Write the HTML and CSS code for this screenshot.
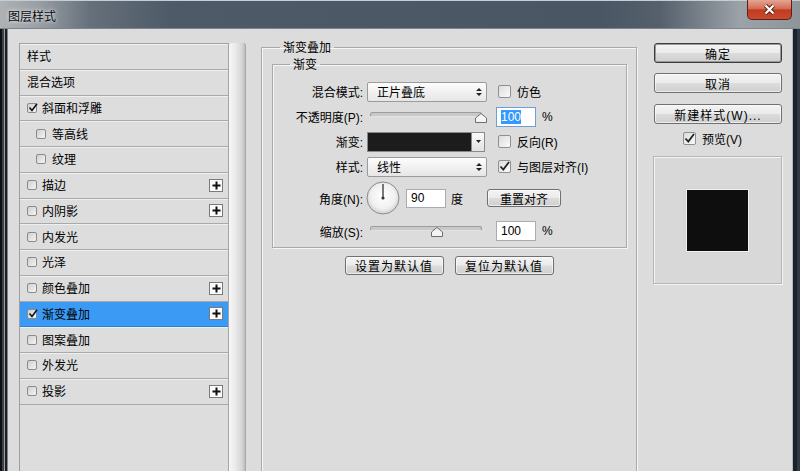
FILE: index.html
```html
<!DOCTYPE html>
<html lang="zh-CN">
<head>
<meta charset="utf-8">
<title>图层样式</title>
<link rel="stylesheet" href="styles.css">
</head>
<body>
<div class="window">
  <div class="titlebar">
    <span class="title">图层样式</span>
    <div class="close"><svg width="13" height="11" viewBox="0 0 13 11"><path d="M2.5 1.5 L10.5 9.5 M10.5 1.5 L2.5 9.5" stroke="#5b2014" stroke-width="4.2"/><path d="M2.5 1.5 L10.5 9.5 M10.5 1.5 L2.5 9.5" stroke="#fff" stroke-width="2.2"/></svg></div>
  </div>
  <div class="frame">
    <div class="client">
      <div class="left">
        <div class="list">
          <div class="row plain"><span>样式</span></div>
          <div class="row plain"><span>混合选项</span></div>
          <div class="row"><i class="cb"><svg width="10" height="10" viewBox="0 0 10 10"><path d="M1.5 4.5 L4 7.5 L9 0.8" fill="none" stroke="#111" stroke-width="1.6"/></svg></i><span>斜面和浮雕</span></div>
          <div class="row sub"><i class="cb"></i><span>等高线</span></div>
          <div class="row sub"><i class="cb"></i><span>纹理</span></div>
          <div class="row"><i class="cb"></i><span>描边</span><span class="plus"><svg width="9" height="9" viewBox="0 0 9 9"><path d="M4.5 0.5v8M0.5 4.5h8" stroke="#111" stroke-width="2"/></svg></span></div>
          <div class="row"><i class="cb"></i><span>内阴影</span><span class="plus"><svg width="9" height="9" viewBox="0 0 9 9"><path d="M4.5 0.5v8M0.5 4.5h8" stroke="#111" stroke-width="2"/></svg></span></div>
          <div class="row"><i class="cb"></i><span>内发光</span></div>
          <div class="row"><i class="cb"></i><span>光泽</span></div>
          <div class="row"><i class="cb"></i><span>颜色叠加</span><span class="plus"><svg width="9" height="9" viewBox="0 0 9 9"><path d="M4.5 0.5v8M0.5 4.5h8" stroke="#111" stroke-width="2"/></svg></span></div>
          <div class="row selected"><i class="cb"><svg width="10" height="10" viewBox="0 0 10 10"><path d="M1.5 4.5 L4 7.5 L9 0.8" fill="none" stroke="#111" stroke-width="1.6"/></svg></i><span>渐变叠加</span><span class="plus"><svg width="9" height="9" viewBox="0 0 9 9"><path d="M4.5 0.5v8M0.5 4.5h8" stroke="#111" stroke-width="2"/></svg></span></div>
          <div class="row"><i class="cb"></i><span>图案叠加</span></div>
          <div class="row"><i class="cb"></i><span>外发光</span></div>
          <div class="row"><i class="cb"></i><span>投影</span><span class="plus"><svg width="9" height="9" viewBox="0 0 9 9"><path d="M4.5 0.5v8M0.5 4.5h8" stroke="#111" stroke-width="2"/></svg></span></div>
        </div>
        <div class="strip"></div>
      </div>

      <div class="middle">
        <fieldset class="outer">
          <legend>渐变叠加</legend>
          <fieldset class="inner">
            <legend>渐变</legend>
            <div class="frow r25">
              <label>混合模式:</label>
              <div class="select"><span>正片叠底</span><svg class="updown" width="6" height="10" viewBox="0 0 6 10"><path d="M0 4 L3 1 L6 4Z M0 6 L3 9 L6 6Z" fill="#222"/></svg></div>
              <i class="box gap11"></i><span class="cbtext">仿色</span>
            </div>
            <div class="frow r25">
              <label>不透明度(P):</label>
              <div class="slider"><div class="track"></div><svg class="thumb" style="left:108px" width="12" height="10" viewBox="0 0 12 10"><path d="M6 0.5 L11.5 5 L11.5 9.5 L0.5 9.5 L0.5 5 Z" fill="#f4f4f4" stroke="#6e6e6e"/></svg></div>
              <div class="input focus"><span class="sel">100</span></div>
              <span class="pct">%</span>
            </div>
            <div class="frow r25">
              <label>渐变:</label>
              <div class="swatch"><div class="fill"></div><div class="drop"><svg width="5" height="3" viewBox="0 0 5 3"><path d="M0 0 H5 L2.5 3Z" fill="#222"/></svg></div></div>
              <i class="box gap13"></i><span class="cbtext">反向(R)</span>
            </div>
            <div class="frow r25">
              <label>样式:</label>
              <div class="select"><span>线性</span><svg class="updown" width="6" height="10" viewBox="0 0 6 10"><path d="M0 4 L3 1 L6 4Z M0 6 L3 9 L6 6Z" fill="#222"/></svg></div>
              <i class="box gap11"><svg width="13" height="13" viewBox="0 0 13 13"><path d="M2.5 6.5 L5.3 9.5 L11 2" fill="none" stroke="#222" stroke-width="1.8"/></svg></i><span class="cbtext">与图层对齐(I)</span>
            </div>
            <div class="frow r38">
              <label>角度(N):</label>
              <svg class="dial" width="34" height="34" viewBox="0 0 34 34">
                <defs><radialGradient id="dg" cx="50%" cy="45%" r="55%"><stop offset="0" stop-color="#ffffff"/><stop offset="0.7" stop-color="#f0f0f0"/><stop offset="1" stop-color="#cfcfcf"/></radialGradient></defs>
                <circle cx="17" cy="17" r="16" fill="url(#dg)" stroke="#8c8c8c"/>
                <path d="M17 17 V3" stroke="#333" stroke-width="1.3"/>
                <circle cx="17" cy="17" r="1.6" fill="#333"/>
              </svg>
              <div class="input angle">90</div>
              <span class="deg">度</span>
              <button class="btn reset">重置对齐</button>
            </div>
            <div class="frow r28">
              <label>缩放(S):</label>
              <div class="slider"><div class="track"></div><svg class="thumb" style="left:64px" width="12" height="10" viewBox="0 0 12 10"><path d="M6 0.5 L11.5 5 L11.5 9.5 L0.5 9.5 L0.5 5 Z" fill="#f4f4f4" stroke="#6e6e6e"/></svg></div>
              <div class="input">100</div>
              <span class="pct">%</span>
            </div>
          </fieldset>
          <div class="defaults">
            <button class="btn dflt">设置为默认值</button>
            <button class="btn dflt">复位为默认值</button>
          </div>
        </fieldset>
      </div>

      <div class="right">
        <button class="btn side primary">确定</button>
        <button class="btn side">取消</button>
        <button class="btn side new">新建样式(W)...</button>
        <div class="preview-row"><i class="box"><svg width="13" height="13" viewBox="0 0 13 13"><path d="M2.5 6.5 L5.3 9.5 L11 2" fill="none" stroke="#222" stroke-width="1.8"/></svg></i><span class="cbtext">预览(V)</span></div>
        <div class="preview"><div class="square"></div></div>
      </div>
    </div>
  </div>
</div>
</body>
</html>
```

FILE: styles.css
```css
* { box-sizing: border-box; }
html, body { margin: 0; padding: 0; width: 800px; height: 471px; overflow: hidden; }
body {
  font-family: "Liberation Sans", "Noto Sans CJK SC", sans-serif;
  font-size: 12px;
  color: #000;
  background: #22282e;
}
.window { display: flex; flex-direction: column; height: 471px; }

.titlebar {
  height: 29px; flex: none;
  display: flex; align-items: flex-start;
  border-top: 1px solid #c9cdd1;
  border-bottom: 1px solid #7d858d;
  background: linear-gradient(to right, #aeb2b6 0, #979da3 40px, #66707b 90px, #4e5a68 170px, #4a5664 600px, #55606c 660px, #7c858e 705px, #9ca2a8 740px, #8d949a 800px);
}
.title {
  font-family: "Noto Sans CJK SC", sans-serif;
  font-size: 12px; line-height: 14px;
  margin: 8px 0 0 8px;
  color: #0a0a0a;
  text-shadow: 0 0 3px #e8ecef, 0 0 6px rgba(230,235,240,.8);
}
.close {
  margin-left: auto; margin-right: 8px; margin-top: -1px;
  width: 45px; height: 20px;
  border: 1px solid #5a2216; border-top: none;
  border-radius: 0 0 5px 5px;
  background: linear-gradient(#e3a595, #d56d55 45%, #c13b1f 52%, #c94a2d);
  display: flex; align-items: center; justify-content: center;
}

.frame {
  flex: 1; display: flex; padding: 0 8px; min-height: 0;
  background:
    linear-gradient(to right, #0c0e10 0 2px, #3b4148 2px 4px, #9aa0a6 4px 5px, #1b1f24 5px 7px, #80858a 7px 8px) left top / 8px 100% no-repeat,
    linear-gradient(to right, #b4b8bc 0 1px, #1a222b 1px 5px, #2e3a46 5px 8px) right top / 8px 100% no-repeat,
    #22282e;
}
.client {
  flex: 1; display: flex; align-items: stretch;
  background: #dcdcdc;
  padding-left: 11px;
  min-height: 0; overflow: hidden;
}

/* left list */
.left { display: flex; margin-top: 14px; flex: none; }
.list {
  width: 210px;
  border-left: 1px solid #9e9e9e;
  border-top: 1px solid #a2a2a2;
  border-right: 1px solid #a6a6a6;
  background: #dddddd;
}
.row {
  height: 25.75px;
  display: flex; align-items: center;
  padding-left: 7px;
  border-bottom: 1px solid #a9a9a9;
  box-shadow: inset 0 1px 0 #efefef;
  font-family: "Noto Sans CJK SC", sans-serif;
  font-size: 12px; line-height: 1;
}
.row.sub { padding-left: 16px; }
.row.selected { background: #3a9af4; box-shadow: none; border-bottom-color: #2f7fd0; }
.cb {
  width: 10px; height: 10px; flex: none;
  border: 1px solid #8b8b8b; border-radius: 2px;
  background: linear-gradient(135deg, #cfcfcf, #f5f5f5);
  margin-right: 5px;
  position: relative;
}
.cb svg { position: absolute; left: 0; top: -1px; }
.row.sub .cb { margin-right: 6px; }
.plus {
  margin-left: auto; margin-right: 5px;
  width: 14px; height: 13px;
  border: 1px solid #7a7a7a;
  background: #fbfbfb;
  display: flex; align-items: center; justify-content: center;
}
.strip {
  width: 17px;
  background: linear-gradient(to right, #f6f6f6, #ececec 35%, #d6d6d6 80%, #bdbdbd);
  border-radius: 3px 3px 0 0;
  border-right: 1px solid #a8a8a8;
}

/* middle */
.middle { margin-left: 15px; margin-top: 11px; flex: none; }
fieldset { margin: 0; padding: 0; min-width: 0; }
legend {
  font-family: "Noto Sans CJK SC", sans-serif;
  font-size: 12px; line-height: 14px;
  padding: 0 3px;
}
.outer {
  width: 376px; height: 470px;
  border: 1px solid #a9a9a9;
  box-shadow: inset 1px 1px 0 #f6f6f6, 1px 1px 0 #f6f6f6;
}
.outer > legend { margin-left: 18px; }
.inner {
  margin: 3px 9px 0 10px;
  border: 1px solid #a9a9a9;
  box-shadow: inset 1px 1px 0 #f6f6f6, 1px 1px 0 #f6f6f6;
  padding: 8px 0 2px 0;
}
.inner > legend { margin-left: 17px; }
.frow { display: flex; align-items: center; }
.r25 { height: 25px; }
.r38 { height: 38px; }
.r28 { height: 28px; }
.frow label {
  width: 90px; margin-right: 4px; flex: none;
  text-align: right;
  font-family: "Liberation Sans", "Noto Sans CJK SC", sans-serif;
  font-size: 12px;
}
.select {
  width: 120px; height: 20px; flex: none;
  border: 1px solid #9b9b9b; border-radius: 2px;
  background: linear-gradient(#fdfdfd, #f1f1f1 50%, #e6e6e6);
  display: flex; align-items: center;
  padding-left: 9px; padding-right: 4px;
  font-family: "Noto Sans CJK SC", sans-serif;
}
.updown { margin-left: auto; }
.box {
  width: 13px; height: 13px; flex: none;
  border: 1px solid #8e8f8f; border-radius: 2px;
  background: linear-gradient(135deg, #dcdcdc, #fbfbfb);
  position: relative;
}
.box svg { position: absolute; left: -1px; top: -1px; }
.gap11 { margin-left: 11px; }
.gap13 { margin-left: 13px; }
.cbtext { margin-left: 6px; }
.slider { width: 120px; height: 12px; position: relative; flex: none; }
.track {
  position: absolute; left: 3px; right: 5px; top: 1px;
  height: 5px; border-radius: 3px;
  background: #c9c9c9;
  border: 1px solid #9c9c9c; border-bottom-color: #e2e2e2;
}
.thumb { position: absolute; top: 2px; }
.input {
  width: 40px; height: 20px; flex: none;
  margin-left: 9px;
  border: 1px solid #a9abb2;
  background: #fff;
  padding-left: 4px;
  display: flex; align-items: center;
}
.input.focus { border-color: #6d9fd6; }
.sel { background: #3399ff; color: #fff; line-height: 14px; }
.pct { margin-left: 6px; }
.swatch {
  width: 118px; height: 20px; flex: none;
  border: 1px solid #8a8a8a;
  display: flex;
}
.swatch .fill { flex: 1; background: #1c1c1c; }
.swatch .drop {
  width: 13px;
  background: linear-gradient(#fafafa, #e2e2e2);
  border-left: 1px solid #8a8a8a;
  display: flex; align-items: center; justify-content: center;
}
.dial { margin-left: -1px; flex: none; }
.input.angle { margin-left: 6px; height: 19px; }
.deg { margin-left: 5px; font-family: "Noto Sans CJK SC", sans-serif; }
.btn {
  font-family: "Liberation Sans", "Noto Sans CJK SC", sans-serif;
  font-size: 12px; color: #000;
  border: 1px solid #707070; border-radius: 3px;
  background: linear-gradient(#f3f3f3, #ebebeb 48%, #dcdcdc 52%, #cfcfcf);
  box-shadow: inset 0 0 0 1px rgba(255,255,255,.6);
  padding: 0; margin: 0;
  display: flex; align-items: center; justify-content: center;
}
.btn.reset { width: 74px; height: 18px; margin-left: 24px; }
.defaults { display: flex; justify-content: center; gap: 11px; margin-top: 8px; }
.btn.dflt { width: 99px; height: 19px; letter-spacing: 1px; }

/* right */
.right { margin-left: 17px; margin-top: 14px; width: 128px; flex: none; display: flex; flex-direction: column; }
.btn.side { width: 128px; height: 20px; letter-spacing: 1px; margin-bottom: 10px; }
.btn.side.primary { border-color: #3c3c3c; box-shadow: inset 0 0 0 1px #9a9a9a; }
.btn.side.new { margin-top: 1px; margin-bottom: 0; }
.preview-row { display: flex; align-items: center; margin-top: 8px; padding-left: 29px; height: 13px; }
.preview-row .cbtext { margin-left: 6px; }
.preview {
  margin-top: 11px; margin-left: -1px;
  width: 129px; height: 128px;
  border: 1px solid #b5b5b5;
  box-shadow: inset 1px 1px 0 #f4f4f4, 1px 1px 0 #f4f4f4;
  background: #d8d8d8;
  display: flex; align-items: center; justify-content: center;
}
.square {
  width: 63px; height: 63px;
  background: #0e0e0e;
  border: 1px solid #f2f2f2;
  box-shadow: 0 0 1px #bbb;
}
```
